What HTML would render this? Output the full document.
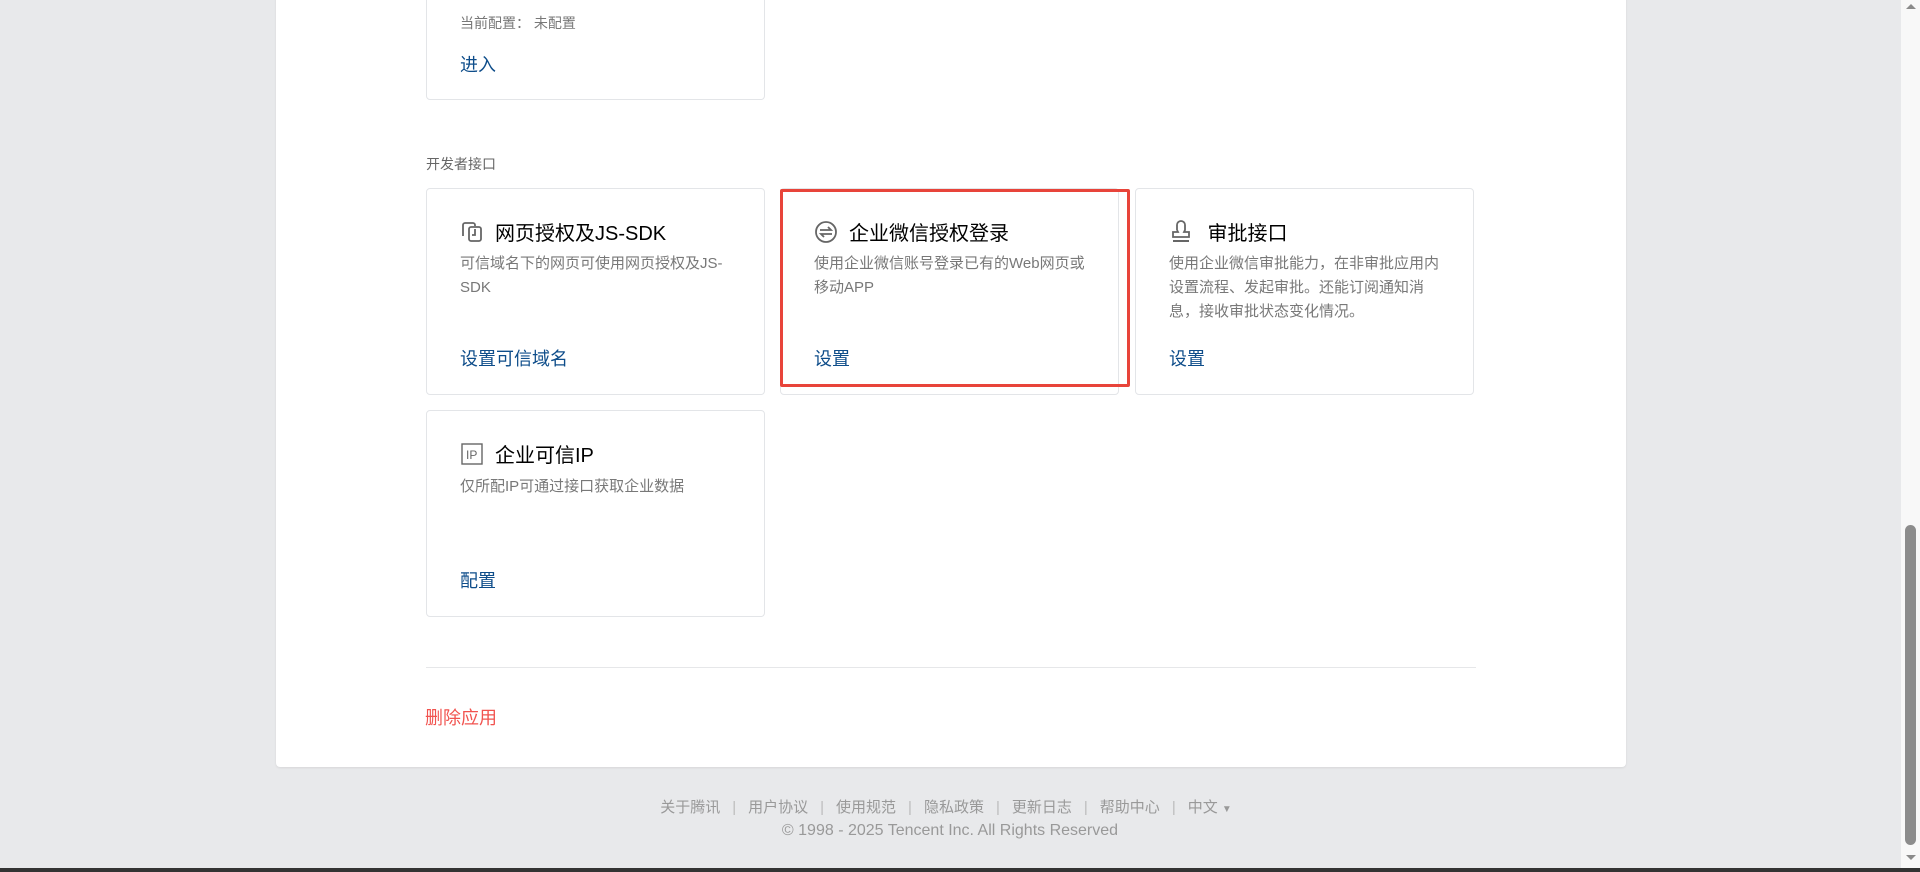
<!DOCTYPE html>
<html><head><meta charset="utf-8"><style>
*{margin:0;padding:0;box-sizing:border-box}
body{width:1920px;height:872px;overflow:hidden;background:#e8e9eb;font-family:"Liberation Sans","Noto Sans CJK SC",sans-serif;position:relative}
.panel{position:absolute;left:276px;top:-6px;width:1350px;height:773px;background:#fff;border-radius:0 0 4px 4px;box-shadow:0 1px 2px rgba(0,0,0,.08)}
.card{position:absolute;width:339px;border:1px solid #e3e5e8;border-radius:4px;background:#fff}
.t{position:absolute;left:33px;font-size:20px;color:#000;display:flex;align-items:center;white-space:nowrap}
.t svg{margin-right:9px}
.d{position:absolute;left:33px;right:26px;font-size:15px;color:#787878;line-height:24px}
.l{position:absolute;left:33px;font-size:18px;color:#0e4d8a}
.ab{position:absolute;font-size:14px;color:#666}
.foot{position:absolute;left:0;width:1900px;text-align:center;font-size:15px;color:#999}
.foot span.s{color:#bbb;margin:0 12px}
</style></head><body>
<div class="panel"></div>
<div class="card" style="left:426px;top:-10px;height:110px">
 <div class="ab" style="left:33px;top:22px;color:#787878;font-size:14px">当前配置：&nbsp;未配置</div>
 <div class="l" style="top:60px">进入</div>
</div>
<div class="ab" style="left:426px;top:154px">开发者接口</div>

<div class="card" style="left:426px;top:188px;height:207px">
 <div class="t" style="top:28px"><svg width="26" height="22" viewBox="0 0 26 22"><path d="M3 15V4a2 2 0 0 1 2-2h8a2 2 0 0 1 2 2v1" fill="none" stroke="#666" stroke-width="1.8"/><path d="M9 8a2 2 0 0 1 2-2h8a2 2 0 0 1 2 2v10a2 2 0 0 1-2 2h-8a2 2 0 0 1-2-2z" fill="none" stroke="#666" stroke-width="1.8"/><path d="M15 8v6h-3" fill="none" stroke="#666" stroke-width="1.8"/></svg>网页授权及JS-SDK</div>
 <div class="d" style="top:63px">可信域名下的网页可使用网页授权及JS-SDK</div>
 <div class="l" style="top:156px">设置可信域名</div>
</div>
<div class="card" style="left:780px;top:188px;height:207px">
 <div class="t" style="top:28px"><svg width="26" height="24" viewBox="0 0 26 24"><circle cx="12" cy="12" r="10" fill="none" stroke="#666" stroke-width="1.8"/><path d="M6 10h11l-3-3M18 14H7l3 3" fill="none" stroke="#666" stroke-width="1.8"/></svg>企业微信授权登录</div>
 <div class="d" style="top:63px">使用企业微信账号登录已有的Web网页或移动APP</div>
 <div class="l" style="top:156px">设置</div>
</div>
<div style="position:absolute;left:780px;top:189px;width:350px;height:198px;border:3px solid #e8443a;border-radius:2px"></div>
<div class="card" style="left:1135px;top:188px;height:207px">
 <div class="t" style="top:28px"><svg width="24" height="26" viewBox="0 0 24 26"><path d="M8 11V6a4 4 0 0 1 8 0v5l-1 2h5v5H4v-5h5l-1-2" fill="none" stroke="#666" stroke-width="1.8"/><path d="M4 22h16" stroke="#666" stroke-width="2"/></svg>&nbsp;审批接口</div>
 <div class="d" style="top:63px">使用企业微信审批能力，在非审批应用内设置流程、发起审批。还能订阅通知消息，接收审批状态变化情况。</div>
 <div class="l" style="top:156px">设置</div>
</div>
<div class="card" style="left:426px;top:410px;height:207px">
 <div class="t" style="top:28px"><svg width="26" height="24" viewBox="0 0 26 24"><rect x="2" y="2" width="20" height="20" fill="none" stroke="#666" stroke-width="1.4"/><text x="6" y="17" font-size="12" fill="#666" font-family="Liberation Sans">IP</text></svg>企业可信IP</div>
 <div class="d" style="top:64px">仅所配IP可通过接口获取企业数据</div>
 <div class="l" style="top:156px">配置</div>
</div>
<div style="position:absolute;left:426px;top:667px;width:1050px;height:1px;background:#e6e7e9"></div>
<div style="position:absolute;left:425px;top:704px;font-size:18px;color:#f1534f">删除应用</div>

<div class="foot" style="top:796px;left:-4px">关于腾讯<span class="s">|</span>用户协议<span class="s">|</span>使用规范<span class="s">|</span>隐私政策<span class="s">|</span>更新日志<span class="s">|</span>帮助中心<span class="s">|</span>中文 <span style="font-size:10px">▼</span></div>
<div class="foot" style="top:822px;left:0px;font-size:16px">© 1998 - 2025 Tencent Inc. All Rights Reserved</div>

<div style="position:absolute;left:1901px;top:0;width:19px;height:868px;background:#f8f8f8"></div>
<div style="position:absolute;left:1906px;top:4px;width:0;height:0;border-left:5px solid transparent;border-right:5px solid transparent;border-bottom:5px solid #8a8a8a"></div>
<div style="position:absolute;left:1906px;top:855px;width:0;height:0;border-left:5px solid transparent;border-right:5px solid transparent;border-top:5px solid #8a8a8a"></div>
<div style="position:absolute;left:1905px;top:525px;width:11px;height:320px;background:#8c8c8c;border-radius:6px"></div>
<div style="position:absolute;left:0;top:868px;width:1920px;height:4px;background:#333"></div>
</body></html>
